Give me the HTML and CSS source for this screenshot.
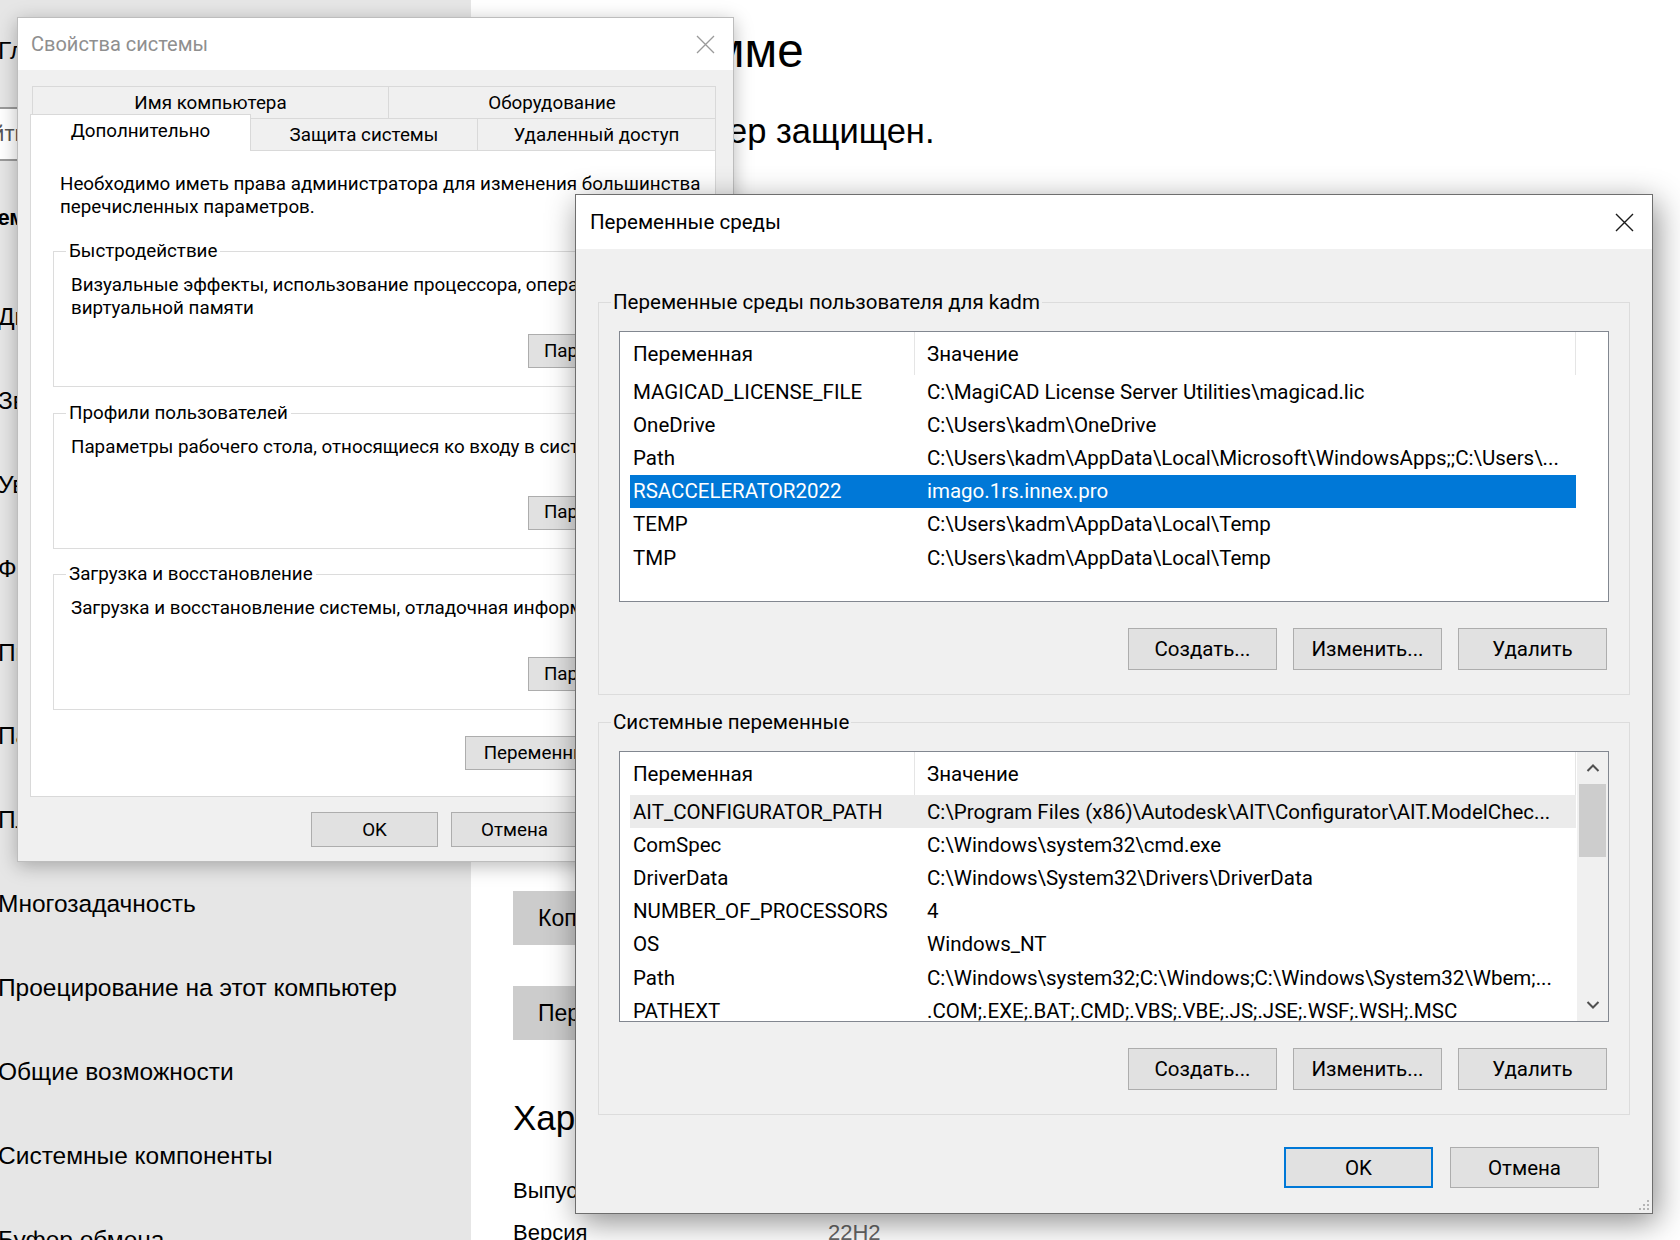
FILE: index.html
```html
<!DOCTYPE html>
<html lang="ru">
<head>
<meta charset="utf-8">
<title>Свойства системы</title>
<link rel="stylesheet" href="styles.css">
</head>
<body>
<div class="desktop">
  <aside class="nav">
    <div class="nav-inner">
      <div class="nav-home">Главная</div>
      <div class="nav-search">Найти параметр</div>
      <div class="nav-section">Система</div>
      <div class="nav-item">Дисплей</div>
      <div class="nav-item">Звук</div>
      <div class="nav-item">Уведомления и действия</div>
      <div class="nav-item">Фокусировка внимания</div>
      <div class="nav-item">Питание и спящий режим</div>
      <div class="nav-item">Память</div>
      <div class="nav-item">Планшет</div>
      <div class="nav-item">Многозадачность</div>
      <div class="nav-item">Проецирование на этот компьютер</div>
      <div class="nav-item">Общие возможности</div>
      <div class="nav-item">Системные компоненты</div>
      <div class="nav-item">Буфер обмена</div>
    </div>
  </aside>

  <main class="main">
    <h1 class="page-title">О программе</h1>
    <p class="lead">Ваш компьютер защищен.</p>
    <div class="covered"></div>
    <div class="main-btn">Копировать</div>
    <div class="main-btn second">Переименовать этот ПК</div>
    <h2 class="sub-title">Характеристики Windows</h2>
    <div class="spec"><span class="spec-k">Выпуск</span><span class="spec-v">Windows 10 Pro</span></div>
    <div class="spec"><span class="spec-k">Версия</span><span class="spec-v">22H2</span></div>
  </main>

  <section class="window sysprops">
    <div class="titlebar sp-titlebar">
      <span class="sp-title">Свойства системы</span>
      <svg class="close-x" width="19" height="19" viewBox="0 0 19 19"><path d="M1 1L18 18M18 1L1 18" stroke="#9a9a9a" stroke-width="1.3" fill="none"/></svg>
    </div>
    <div class="sp-body">
      <div class="tabrow back">
        <div class="tab t-name">Имя компьютера</div>
        <div class="tab t-hw">Оборудование</div>
      </div>
      <div class="tabrow front">
        <div class="tab t-adv selected">Дополнительно</div>
        <div class="tab t-prot">Защита системы</div>
        <div class="tab t-remote">Удаленный доступ</div>
      </div>
      <div class="sp-panel">
        <p class="sp-intro">Необходимо иметь права администратора для изменения большинства<br>перечисленных параметров.</p>
        <fieldset class="sp-group first">
          <legend>Быстродействие</legend>
          <p class="sp-text">Визуальные эффекты, использование процессора, оперативной памяти и<br>виртуальной памяти</p>
          <div class="sp-btn-row"><div class="btn sp-btn">Параметры...</div></div>
        </fieldset>
        <fieldset class="sp-group">
          <legend>Профили пользователей</legend>
          <p class="sp-text">Параметры рабочего стола, относящиеся ко входу в систему</p>
          <div class="sp-btn-row"><div class="btn sp-btn">Параметры...</div></div>
        </fieldset>
        <fieldset class="sp-group">
          <legend>Загрузка и восстановление</legend>
          <p class="sp-text">Загрузка и восстановление системы, отладочная информация</p>
          <div class="sp-btn-row"><div class="btn sp-btn">Параметры...</div></div>
        </fieldset>
        <div class="btn sp-env">Переменные среды...</div>
      </div>
      <div class="sp-actions">
        <div class="btn sp-act">OK</div>
        <div class="btn sp-act">Отмена</div>
        <div class="btn sp-act disabled">Применить</div>
      </div>
    </div>
  </section>

  <section class="window envvars">
    <div class="titlebar ev-titlebar">
      <span class="ev-title">Переменные среды</span>
      <svg class="close-x" width="19" height="19" viewBox="0 0 19 19"><path d="M1 1L18 18M18 1L1 18" stroke="#1a1a1a" stroke-width="1.4" fill="none"/></svg>
    </div>
    <div class="ev-body">
      <fieldset class="ev-group">
        <legend>Переменные среды пользователя для kadm</legend>
        <div class="listview">
          <div class="lv-main">
            <div class="lv-head"><div class="lv-h1">Переменная</div><div class="lv-h2">Значение</div></div>
            <div class="lv-row"><span class="c1">MAGICAD_LICENSE_FILE</span><span class="c2">C:\MagiCAD License Server Utilities\magicad.lic</span></div>
            <div class="lv-row"><span class="c1">OneDrive</span><span class="c2">C:\Users\kadm\OneDrive</span></div>
            <div class="lv-row"><span class="c1">Path</span><span class="c2">C:\Users\kadm\AppData\Local\Microsoft\WindowsApps;;C:\Users\...</span></div>
            <div class="lv-row sel"><span class="c1">RSACCELERATOR2022</span><span class="c2">imago.1rs.innex.pro</span></div>
            <div class="lv-row"><span class="c1">TEMP</span><span class="c2">C:\Users\kadm\AppData\Local\Temp</span></div>
            <div class="lv-row"><span class="c1">TMP</span><span class="c2">C:\Users\kadm\AppData\Local\Temp</span></div>
          </div>
        </div>
        <div class="ev-btns">
          <div class="btn ev-btn">Создать...</div>
          <div class="btn ev-btn">Изменить...</div>
          <div class="btn ev-btn">Удалить</div>
        </div>
      </fieldset>
      <fieldset class="ev-group second">
        <legend>Системные переменные</legend>
        <div class="listview">
          <div class="lv-main">
            <div class="lv-head"><div class="lv-h1">Переменная</div><div class="lv-h2">Значение</div></div>
            <div class="lv-row hl"><span class="c1">AIT_CONFIGURATOR_PATH</span><span class="c2">C:\Program Files (x86)\Autodesk\AIT\Configurator\AIT.ModelChec...</span></div>
            <div class="lv-row"><span class="c1">ComSpec</span><span class="c2">C:\Windows\system32\cmd.exe</span></div>
            <div class="lv-row"><span class="c1">DriverData</span><span class="c2">C:\Windows\System32\Drivers\DriverData</span></div>
            <div class="lv-row"><span class="c1">NUMBER_OF_PROCESSORS</span><span class="c2">4</span></div>
            <div class="lv-row"><span class="c1">OS</span><span class="c2">Windows_NT</span></div>
            <div class="lv-row"><span class="c1">Path</span><span class="c2">C:\Windows\system32;C:\Windows;C:\Windows\System32\Wbem;...</span></div>
            <div class="lv-row"><span class="c1">PATHEXT</span><span class="c2">.COM;.EXE;.BAT;.CMD;.VBS;.VBE;.JS;.JSE;.WSF;.WSH;.MSC</span></div>
          </div>
          <div class="scrollbar">
            <div class="sb-arrow"><svg width="14" height="10" viewBox="0 0 14 10"><path d="M1.5 8L7 2.5L12.5 8" stroke="#505050" stroke-width="2" fill="none"/></svg></div>
            <div class="sb-track"><div class="sb-thumb"></div></div>
            <div class="sb-arrow"><svg width="14" height="10" viewBox="0 0 14 10"><path d="M1.5 2L7 7.5L12.5 2" stroke="#505050" stroke-width="2" fill="none"/></svg></div>
          </div>
        </div>
        <div class="ev-btns">
          <div class="btn ev-btn">Создать...</div>
          <div class="btn ev-btn">Изменить...</div>
          <div class="btn ev-btn">Удалить</div>
        </div>
      </fieldset>
      <div class="ev-actions">
        <div class="btn ev-act default">OK</div>
        <div class="btn ev-act">Отмена</div>
      </div>
    </div>
    <svg class="grip" width="14" height="14" viewBox="0 0 14 14">
      <rect x="11" y="3" width="2" height="2" fill="#b4b4b4"/>
      <rect x="7" y="7" width="2" height="2" fill="#b4b4b4"/>
      <rect x="11" y="7" width="2" height="2" fill="#b4b4b4"/>
      <rect x="3" y="11" width="2" height="2" fill="#b4b4b4"/>
      <rect x="7" y="11" width="2" height="2" fill="#b4b4b4"/>
      <rect x="11" y="11" width="2" height="2" fill="#b4b4b4"/>
    </svg>
  </section>
</div>
</body>
</html>
```

FILE: styles.css
```css
* { box-sizing: border-box; }
html, body { margin: 0; padding: 0; }
body {
  width: 1680px;
  height: 1240px;
  overflow: hidden;
  background: #ffffff;
  color: #000;
  font-family: "Liberation Sans", Arial, sans-serif;
}
p { margin: 0; }

.desktop {
  position: relative;
  width: 1680px;
  height: 1240px;
  display: grid;
  grid-template-columns: 471px 1fr;
  overflow: hidden;
}

/* ---------- Settings navigation ---------- */
.nav {
  background: #e6e6e6;
  overflow: hidden;
}
.nav-inner {
  margin-left: -60px;
  display: flex;
  flex-direction: column;
  white-space: nowrap;
}
.nav-home {
  height: 102px;
  display: flex;
  align-items: center;
  padding-left: 58px;
  font-size: 24.5px;
}
.nav-search {
  margin: 5px 0 0 10px;
  height: 54px;
  border: 2px solid #9a9a9a;
  background: #fff;
  display: flex;
  align-items: center;
  padding-left: 12px;
  font-size: 22px;
  color: #555;
}
.nav-section {
  height: 114px;
  display: flex;
  align-items: center;
  padding-left: 5px;
  font-size: 22px;
  font-weight: 700;
}
.nav-item {
  height: 83.9px;
  display: flex;
  align-items: center;
  padding-left: 58px;
  font-size: 24.5px;
}

/* ---------- Settings main area ---------- */
.main {
  padding: 23px 0 0 42px;
  overflow: hidden;
  white-space: nowrap;
}
.page-title {
  margin: 0;
  font-size: 47.5px;
  line-height: 56px;
  font-weight: 400;
}
.lead {
  margin-top: 32px;
  font-size: 34.5px;
  line-height: 40px;
}
.covered { height: 740px; }
.main-btn {
  width: 330px;
  height: 54px;
  background: #cccccc;
  display: flex;
  align-items: center;
  padding-left: 25px;
  font-size: 23px;
}
.main-btn.second { margin-top: 41px; }
.sub-title {
  margin: 56px 0 0;
  font-size: 35px;
  line-height: 44px;
  font-weight: 400;
}
.spec {
  display: flex;
  height: 42px;
  align-items: center;
  font-size: 22px;
}
.sub-title + .spec { margin-top: 30px; }
.spec-k { width: 315px; }
.spec-v { color: #666; }

/* ---------- Windows ---------- */
.window {
  position: absolute;
  display: flex;
  flex-direction: column;
  background: #f0f0f0;
  white-space: nowrap;
  font-family: Roboto, "Liberation Sans", Arial, sans-serif;
}
.titlebar {
  background: #fff;
  display: flex;
  align-items: center;
  justify-content: space-between;
  flex: none;
}
.btn {
  background: #e1e1e1;
  border: 1px solid #adadad;
  display: flex;
  align-items: center;
  justify-content: center;
  color: #000;
}

/* System properties dialog */
.sysprops {
  left: 17px;
  top: 17px;
  width: 717px;
  height: 845px;
  border: 1px solid #bdbdbd;
  box-shadow: 0 4px 18px rgba(0, 0, 0, 0.28);
  font-size: 18.8px;
}
.sp-titlebar {
  height: 52px;
  padding: 0 18px 0 13px;
}
.sp-title {
  color: #8f8f8f;
  font-size: 20px;
}
.sp-body {
  padding: 16px 17px 0 12px;
  display: flex;
  flex-direction: column;
}
.tabrow {
  display: flex;
  height: 32px;
}
.tabrow.back { padding-left: 2px; }
.tab {
  height: 32px;
  border: 1px solid #d9d9d9;
  border-bottom: none;
  background: #f0f0f0;
  display: flex;
  align-items: center;
  justify-content: center;
  margin-right: -1px;
}
.tab.t-name { width: 357px; }
.tab.t-hw { width: 328px; }
.tab.t-adv { width: 221px; }
.tab.t-prot { width: 228px; }
.tab.t-remote { width: 239px; }
.tab.selected {
  position: relative;
  z-index: 2;
  background: #fff;
  height: 37px;
  margin-top: -4px;
  align-items: flex-start;
  padding-top: 5px;
}
.sp-panel {
  height: 647px;
  background: #fff;
  border: 1px solid #d9d9d9;
  padding: 22px 23px 0 22px;
  display: flex;
  flex-direction: column;
  line-height: 23px;
  overflow: hidden;
}
.sp-intro { margin-left: 7px; }
.sp-group {
  margin: 14.5px 0 0;
  border: 1px solid #dcdcdc;
  padding: 0 14px 0 16px;
  height: 147px;
  min-width: 0;
}
.sp-group.first { margin-top: 21px; }
.sp-group legend {
  padding: 0 3px;
  margin-left: -4px;
  line-height: 23px;
}
.sp-text {
  margin: 11px 0 0 1px;
  min-height: 46px;
}
.sp-btn-row {
  display: flex;
  justify-content: flex-end;
  margin-top: 14px;
}
.sp-btn {
  width: 149px;
  height: 34px;
}
.sp-env {
  margin-top: 26px;
  align-self: flex-end;
  width: 227px;
  height: 34px;
}
.sp-actions {
  display: flex;
  justify-content: flex-end;
  gap: 13px;
  margin: 15px -2px 0 0;
}
.sp-act {
  width: 127px;
  height: 35px;
}
.sp-act.disabled { color: #a0a0a0; }

/* Environment variables dialog */
.envvars {
  left: 575px;
  top: 194px;
  width: 1078px;
  height: 1020px;
  border: 1px solid #6e6e6e;
  box-shadow: 4px 8px 30px rgba(0, 0, 0, 0.45);
  font-size: 20.5px;
}
.ev-titlebar {
  height: 54px;
  padding: 0 18px 0 14px;
}
.ev-body {
  padding: 41px 22px 0 22px;
  display: flex;
  flex-direction: column;
}
.ev-group {
  margin: 0;
  border: 1px solid #dcdcdc;
  padding: 17px 20px 24px 20px;
  min-width: 0;
  display: flex;
  flex-direction: column;
}
.ev-group.second { margin-top: 15px; }
.ev-group legend {
  padding: 0 2px;
  margin-left: -8px;
  line-height: 24px;
}
.listview {
  height: 271px;
  background: #fff;
  border: 1px solid #828790;
  display: flex;
  overflow: hidden;
}
.lv-main {
  flex: 1;
  min-width: 0;
}
.lv-head {
  display: grid;
  grid-template-columns: 295px 661px;
  height: 43px;
}
.lv-h1, .lv-h2 {
  display: flex;
  align-items: center;
  border-right: 1px solid #e5e5e5;
}
.lv-h1 { padding-left: 13px; }
.lv-h2 { padding-left: 12px; }
.lv-row {
  display: grid;
  grid-template-columns: 285px 661px;
  width: 946px;
  height: 33.2px;
  margin-left: 10px;
  align-items: center;
}
.lv-row .c1 { padding-left: 3px; overflow: hidden; }
.lv-row .c2 { padding-left: 12px; overflow: hidden; }
.lv-row.sel {
  background: #0078d7;
  color: #fff;
}
.lv-row.hl { background: #ebebeb; }
.scrollbar {
  width: 31px;
  flex: none;
  background: #f0f0f0;
  display: flex;
  flex-direction: column;
}
.sb-arrow {
  height: 32px;
  display: flex;
  align-items: center;
  justify-content: center;
  flex: none;
}
.sb-track { flex: 1; }
.sb-thumb {
  height: 73px;
  margin: 0 2px;
  background: #cdcdcd;
}
.ev-btns {
  display: flex;
  justify-content: flex-end;
  gap: 16px;
  margin: 26px 2px 0 0;
}
.ev-btn {
  width: 149px;
  height: 42px;
}
.ev-actions {
  display: flex;
  justify-content: flex-end;
  gap: 17px;
  margin: 32px 31px 0 0;
}
.ev-act {
  width: 149px;
  height: 41px;
}
.ev-act.default {
  border: 2px solid #0078d7;
}
.grip {
  position: absolute;
  right: 2px;
  bottom: 2px;
}
```
